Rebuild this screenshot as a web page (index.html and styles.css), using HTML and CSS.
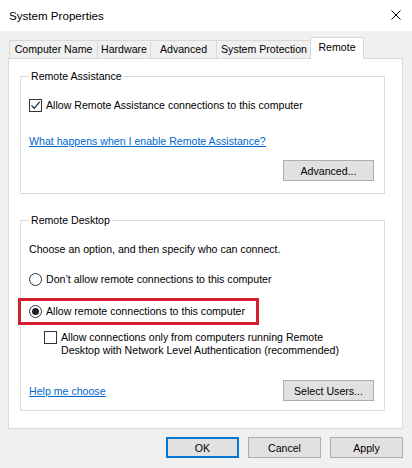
FILE: index.html
```html
<!DOCTYPE html>
<html lang="en">
<head>
  <meta charset="UTF-8">
  <title>System Properties</title>
  <link rel="stylesheet" href="styles.css">
</head>
<body>

  <div class="titlebar">
    <span class="title">System Properties</span>
    <svg class="close" width="10" height="10" viewBox="0 0 10 10">
      <path d="M0.5 0.5 L9.5 9.5 M9.5 0.5 L0.5 9.5" stroke="#000" stroke-width="1" fill="none"/>
    </svg>
  </div>

  <div class="tabs">
    <div class="tab tab-name">Computer Name</div>
    <div class="tab tab-hw">Hardware</div>
    <div class="tab tab-adv">Advanced</div>
    <div class="tab tab-prot">System Protection</div>
    <div class="tab active">Remote</div>
  </div>

  <div class="panel">
    <fieldset class="group assist">
      <legend>Remote Assistance</legend>
      <div class="opt first">
        <span class="chk">
          <svg width="11" height="11" viewBox="0 0 11 11"><path d="M1.5 5.5 L4.2 8.3 L9.6 1.8" stroke="#222" stroke-width="1.2" fill="none"/></svg>
        </span>
        <span>Allow Remote Assistance connections to this computer</span>
      </div>
      <a class="link what">What happens when I enable Remote Assistance?</a>
      <div class="btnrow">
        <button class="btn">Advanced...</button>
      </div>
    </fieldset>

    <fieldset class="group desktop">
      <legend>Remote Desktop</legend>
      <p class="intro">Choose an option, and then specify who can connect.</p>
      <div class="opt radio-row">
        <span class="radio"></span>
        <span>Don’t allow remote connections to this computer</span>
      </div>
      <div class="highlight">
        <div class="opt">
          <span class="radio on"></span>
          <span>Allow remote connections to this computer</span>
        </div>
      </div>
      <div class="opt nla">
        <span class="chk"></span>
        <span>Allow connections only from computers running Remote<br>Desktop with Network Level Authentication (recommended)</span>
      </div>
      <div class="btnrow spread">
        <a class="link">Help me choose</a>
        <button class="btn">Select Users...</button>
      </div>
    </fieldset>
  </div>

  <div class="footer">
    <button class="btn dlg default">OK</button>
    <button class="btn dlg">Cancel</button>
    <button class="btn dlg">Apply</button>
  </div>

</body>
</html>
```

FILE: styles.css
```css
body {
  margin: 0;
  width: 412px;
  height: 468px;
  overflow: hidden;
  background-color: #f0f0f0;
  font-family: "Liberation Sans", Arial, sans-serif;
  font-size: 10.6px;
  color: #000;
}

.titlebar {
  height: 31px;
  background-color: #fff;
  display: flex;
  align-items: center;
  justify-content: space-between;
  padding: 0 11px 0 9px;
}

.title {
  font-size: 11.6px;
}

.close {
  margin-top: -1px;
}

.tabs {
  display: flex;
  align-items: flex-end;
  height: 27px;
  padding-left: 9px;
}

.tab {
  box-sizing: border-box;
  height: 18px;
  line-height: 17px;
  text-align: center;
  border: 1px solid #d9d9d9;
  border-bottom: none;
  margin-right: -1px;
  background-color: #f0f0f0;
  white-space: nowrap;
}

.tab-name { width: 89px; }
.tab-hw { width: 54px; }
.tab-adv { width: 67px; }
.tab-prot { width: 96px; }

.tab.active {
  width: 54px;
  height: 22px;
  line-height: 19px;
  margin: 0 -2px -1px -1px;
  background-color: #fff;
  position: relative;
}

.panel {
  margin: 0 9px 0 8px;
  height: 359px;
  background-color: #fff;
  border: 1px solid #d9d9d9;
  padding: 10px 17px 0 11px;
}

.group {
  margin: 0;
  padding: 0 10px 0 8px;
  border: 1px solid #dcdcdc;
}

.group legend {
  padding: 0 2px;
  line-height: 14px;
}

.opt {
  display: flex;
  align-items: center;
  gap: 4px;
  line-height: 13px;
}

.opt.first {
  margin-top: 16px;
}

.chk {
  width: 11px;
  height: 11px;
  border: 1px solid #333;
  flex: none;
  display: flex;
}

.radio {
  width: 11px;
  height: 11px;
  border: 1px solid #333;
  border-radius: 50%;
  flex: none;
  display: flex;
  align-items: center;
  justify-content: center;
}

.radio.on::after {
  content: "";
  width: 7px;
  height: 7px;
  border-radius: 50%;
  background-color: #222;
}

.link {
  color: #0066cc;
  text-decoration: underline;
  display: block;
  line-height: 14px;
}

.link.what {
  margin-top: 22px;
}

.btnrow {
  display: flex;
  justify-content: flex-end;
  margin-top: 12px;
  margin-bottom: 12px;
}

.btnrow.spread {
  justify-content: space-between;
  align-items: center;
  margin-top: 23px;
  margin-bottom: 9px;
}

.btn {
  font-family: inherit;
  font-size: 10.6px;
  width: 91px;
  height: 21px;
  padding: 0;
  background-color: #e1e1e1;
  border: 1px solid #adadad;
  border-radius: 0;
  color: #000;
}

.group.desktop {
  margin-top: 19px;
}

.intro {
  margin: 15px 0 0;
  line-height: 14px;
}

.radio-row {
  margin-top: 17px;
}

.highlight {
  margin: 12px 0 0 -11px;
  width: 227px;
  border: 3px solid #d3202e;
  padding: 4px 0 4px 8px;
}

.nla {
  align-items: flex-start;
  margin: 6px 0 0 15px;
}

.footer {
  display: flex;
  justify-content: flex-end;
  gap: 9px;
  padding: 8px 9px 0 0;
}

.btn.dlg {
  width: 73px;
  height: 21px;
}

.btn.default {
  border: 2px solid #0078d7;
}
```
